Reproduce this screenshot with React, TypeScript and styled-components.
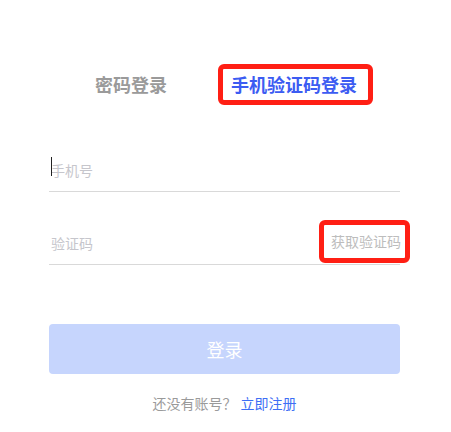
import React from "react";
import styled, { createGlobalStyle } from "styled-components";

const Global = createGlobalStyle`
  html, body { margin: 0; padding: 0; background: #ffffff; }
  body { font-family: "Noto Sans CJK SC", "Noto Sans", sans-serif; }
  * { box-sizing: border-box; }
`;

const Page = styled.div`
  width: 451px;
  padding: 64px 51px 0 49px;
  display: flex;
  flex-direction: column;
`;

const Tabs = styled.div`
  display: flex;
  align-items: center;
  padding-left: 33px;
  gap: 35px;
  height: 41px;
`;

const Tab = styled.div<{ $active?: boolean }>`
  font-size: 18px;
  font-weight: 700;
  line-height: 31px;
  color: ${(p) => (p.$active ? "#3c5cf2" : "#9a9a9a")};
  border: 5px solid ${(p) => (p.$active ? "#ff1f14" : "transparent")};
  border-radius: 6px;
  padding: 0 11px 0 8px;
  white-space: nowrap;
`;

const Field = styled.div<{ $top: number }>`
  position: relative;
  margin-top: ${(p) => p.$top}px;
  height: 41px;
  display: flex;
  align-items: center;
  border-bottom: 1px solid #d9d9d9;
`;

const Input = styled.input`
  flex: 1;
  border: none;
  outline: none;
  padding: 0 0 3px 2px;
  height: 40px;
  font-family: inherit;
  font-size: 14px;
  color: #333;
  background: transparent;
  &::placeholder { color: #c6c6cc; }
`;

const Caret = styled.span`
  position: absolute;
  left: 2px;
  top: 6px;
  width: 1px;
  height: 19px;
  background: #222;
`;

const CodeButton = styled.div`
  align-self: flex-start;
  margin-top: -4px;
  font-size: 14px;
  color: #bdbdbd;
  line-height: 33px;
  border: 5px solid #ff1f14;
  border-radius: 6px;
  padding: 0 4px 0 7px;
  margin-right: -10px;
  white-space: nowrap;
`;

const Submit = styled.button`
  margin-top: 59px;
  height: 50px;
  width: 100%;
  border: none;
  border-radius: 4px;
  background: #c6d5fd;
  color: #ffffff;
  font-family: inherit;
  font-size: 18px;
  cursor: pointer;
`;

const Footer = styled.div`
  margin-top: 19px;
  text-align: center;
  font-size: 14px;
  line-height: 20px;
  color: #9a9a9a;
`;

const Link = styled.a`
  color: #3d6ef5;
  text-decoration: none;
  margin-left: 4px;
`;

export default function App() {
  return (
    <>
      <Global />
      <Page>
        <Tabs>
          <Tab>密码登录</Tab>
          <Tab $active>手机验证码登录</Tab>
        </Tabs>
        <Field $top={46}>
          <Input placeholder="手机号" />
          <Caret />
        </Field>
        <Field $top={32}>
          <Input placeholder="验证码" />
          <CodeButton>获取验证码</CodeButton>
        </Field>
        <Submit>登录</Submit>
        <Footer>
          还没有账号？<Link href="#">立即注册</Link>
        </Footer>
      </Page>
    </>
  );
}
